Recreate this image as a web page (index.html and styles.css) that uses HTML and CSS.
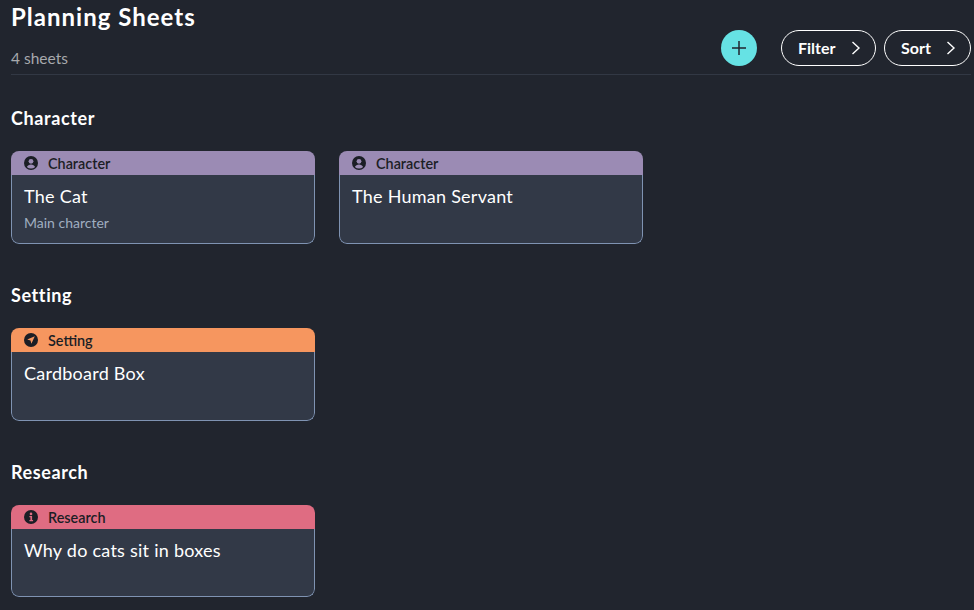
FILE: index.html
```html
<!DOCTYPE html>
<html lang="en">
<head>
<meta charset="utf-8">
<title>Planning Sheets</title>
<link rel="stylesheet" href="styles.css">
</head>
<body>
<main class="page">
  <header class="header">
    <div class="header-text">
      <h1 class="title">Planning Sheets</h1>
      <p class="count">4 sheets</p>
    </div>
    <div class="actions">
      <button class="add" type="button" aria-label="Add">
        <svg viewBox="0 0 16 16" width="16" height="16"><path d="M8 1v14M1 8h14" fill="none" stroke="#21252e" stroke-width="1.5"/></svg>
      </button>
      <button class="pill pill-filter" type="button"><span>Filter</span>
        <svg class="chev" viewBox="0 0 10 16" width="10" height="16"><path d="M1.500 2l6.500 6-6.500 6" fill="none" stroke="currentColor" stroke-width="1.400"/></svg>
      </button>
      <button class="pill pill-sort" type="button"><span>Sort</span>
        <svg class="chev" viewBox="0 0 10 16" width="10" height="16"><path d="M1.500 2l6.500 6-6.500 6" fill="none" stroke="currentColor" stroke-width="1.400"/></svg>
      </button>
    </div>
  </header>

  <section class="section">
    <h2 class="section-title">Character</h2>
    <div class="cards">
      <article class="card">
        <div class="tag tag-character">
          <svg class="tag-icon" viewBox="0 0 14 14"><circle cx="7" cy="7" r="7" fill="#1b1e25"/><circle cx="7" cy="5.300" r="2.400" fill="#9b8bb4"/><path d="M2.900 11c.6-1.800 2.200-2.600 4.100-2.600s3.500.8 4.100 2.600A5.800 5.800 0 0 1 7 12.600 5.800 5.800 0 0 1 2.900 11z" fill="#9b8bb4"/></svg>
          <span>Character</span>
        </div>
        <div class="card-body">
          <h3 class="card-title">The Cat</h3>
          <p class="card-desc">Main charcter</p>
        </div>
      </article>
      <article class="card">
        <div class="tag tag-character">
          <svg class="tag-icon" viewBox="0 0 14 14"><circle cx="7" cy="7" r="7" fill="#1b1e25"/><circle cx="7" cy="5.300" r="2.400" fill="#9b8bb4"/><path d="M2.900 11c.6-1.800 2.200-2.600 4.100-2.600s3.500.8 4.100 2.600A5.800 5.800 0 0 1 7 12.600 5.800 5.800 0 0 1 2.900 11z" fill="#9b8bb4"/></svg>
          <span>Character</span>
        </div>
        <div class="card-body">
          <h3 class="card-title">The Human Servant</h3>
        </div>
      </article>
    </div>
  </section>

  <section class="section">
    <h2 class="section-title">Setting</h2>
    <div class="cards">
      <article class="card">
        <div class="tag tag-setting">
          <svg class="tag-icon" viewBox="0 0 14 14"><circle cx="7" cy="7" r="7" fill="#1b1e25"/><path d="M10.800 3.200 3.200 6.600l3.300.9.900 3.300z" fill="#f6965f"/></svg>
          <span>Setting</span>
        </div>
        <div class="card-body">
          <h3 class="card-title">Cardboard Box</h3>
        </div>
      </article>
    </div>
  </section>

  <section class="section">
    <h2 class="section-title">Research</h2>
    <div class="cards">
      <article class="card card-short">
        <div class="tag tag-research">
          <svg class="tag-icon" viewBox="0 0 14 14"><circle cx="7" cy="7" r="7" fill="#1b1e25"/><circle cx="7" cy="3.900" r="1.300" fill="#df6c82"/><path d="M5.400 6h2.700v4h1v1.200H5.400V10h1V7.200h-1z" fill="#df6c82"/></svg>
          <span>Research</span>
        </div>
        <div class="card-body">
          <h3 class="card-title">Why do cats sit in boxes</h3>
        </div>
      </article>
    </div>
  </section>
</main>
</body>
</html>
```
FILE: styles.css
```css
* { box-sizing: border-box; }
html, body { margin: 0; height: 100%; }
body {
  background: #21252e;
  color: #fff;
  font-family: "Lato", sans-serif;
  overflow: hidden;
}
.page { padding: 0 3px 0 11px; }
.header {
  height: 75px;
  border-bottom: 1px solid #323844;
  display: flex;
  justify-content: space-between;
}
.title {
  margin: 0;
  padding-top: 2px;
  font-size: 24px;
  line-height: 30px;
  font-weight: 700;
  letter-spacing: 1px;
}
.count {
  margin: 16px 0 0;
  font-size: 15.500px;
  line-height: 20px;
  color: #a7a9ad;
}
.actions {
  display: flex;
  align-items: center;
  padding-top: 22px;
  height: 74px;
}
.add {
  width: 36px;
  height: 36px;
  border: 0;
  padding: 0;
  border-radius: 50%;
  background: #66e2e4;
  display: flex;
  align-items: center;
  justify-content: center;
  margin-right: 24px;
}
.pill {
  height: 36px;
  border: 1px solid #fff;
  border-radius: 18px;
  background: transparent;
  color: #fff;
  font: 700 16px "Lato", sans-serif;
  display: flex;
  align-items: center;
  justify-content: space-between;
  padding: 0 14px 2px 16px;
}
.chev { margin-top: 2px; }
.pill-filter { width: 95px; margin-right: 8px; }
.pill-sort { width: 87px; }
.section { height: 177px; padding-top: 32px; }
.section-title {
  margin: 0;
  font-size: 18px;
  line-height: 22px;
  font-weight: 700;
  letter-spacing: .6px;
}
.cards {
  display: flex;
  gap: 24px;
  margin-top: 22px;
}
.card {
  width: 304px;
  height: 93px;
  border-radius: 8px;
  overflow: hidden;
  display: flex;
  flex-direction: column;
}
.card-short { height: 92px; }
.tag {
  height: 24px;
  flex: none;
  display: flex;
  align-items: center;
  gap: 10px;
  padding-left: 13px;
  color: #1b1e25;
  font-size: 14.400px;
  font-weight: 600;
}
.tag-icon { width: 14px; height: 14px; }
.tag-character { background: #9b8bb4; }
.tag-setting { background: #f6965f; }
.tag-research { background: #df6c82; }
.card-body {
  flex: 1;
  padding: 9px 12px 0;
  border: 1px solid #7f93b2;
  border-top: 0;
  border-radius: 0 0 8px 8px;
  background: #323947;
}
.card-title {
  margin: 0;
  font-size: 18px;
  line-height: 24px;
  font-weight: 400;
  letter-spacing: .25px;
}
.card-desc {
  margin: 6px 0 0;
  font-size: 14px;
  line-height: 18px;
  color: #a0aec0;
}
```
